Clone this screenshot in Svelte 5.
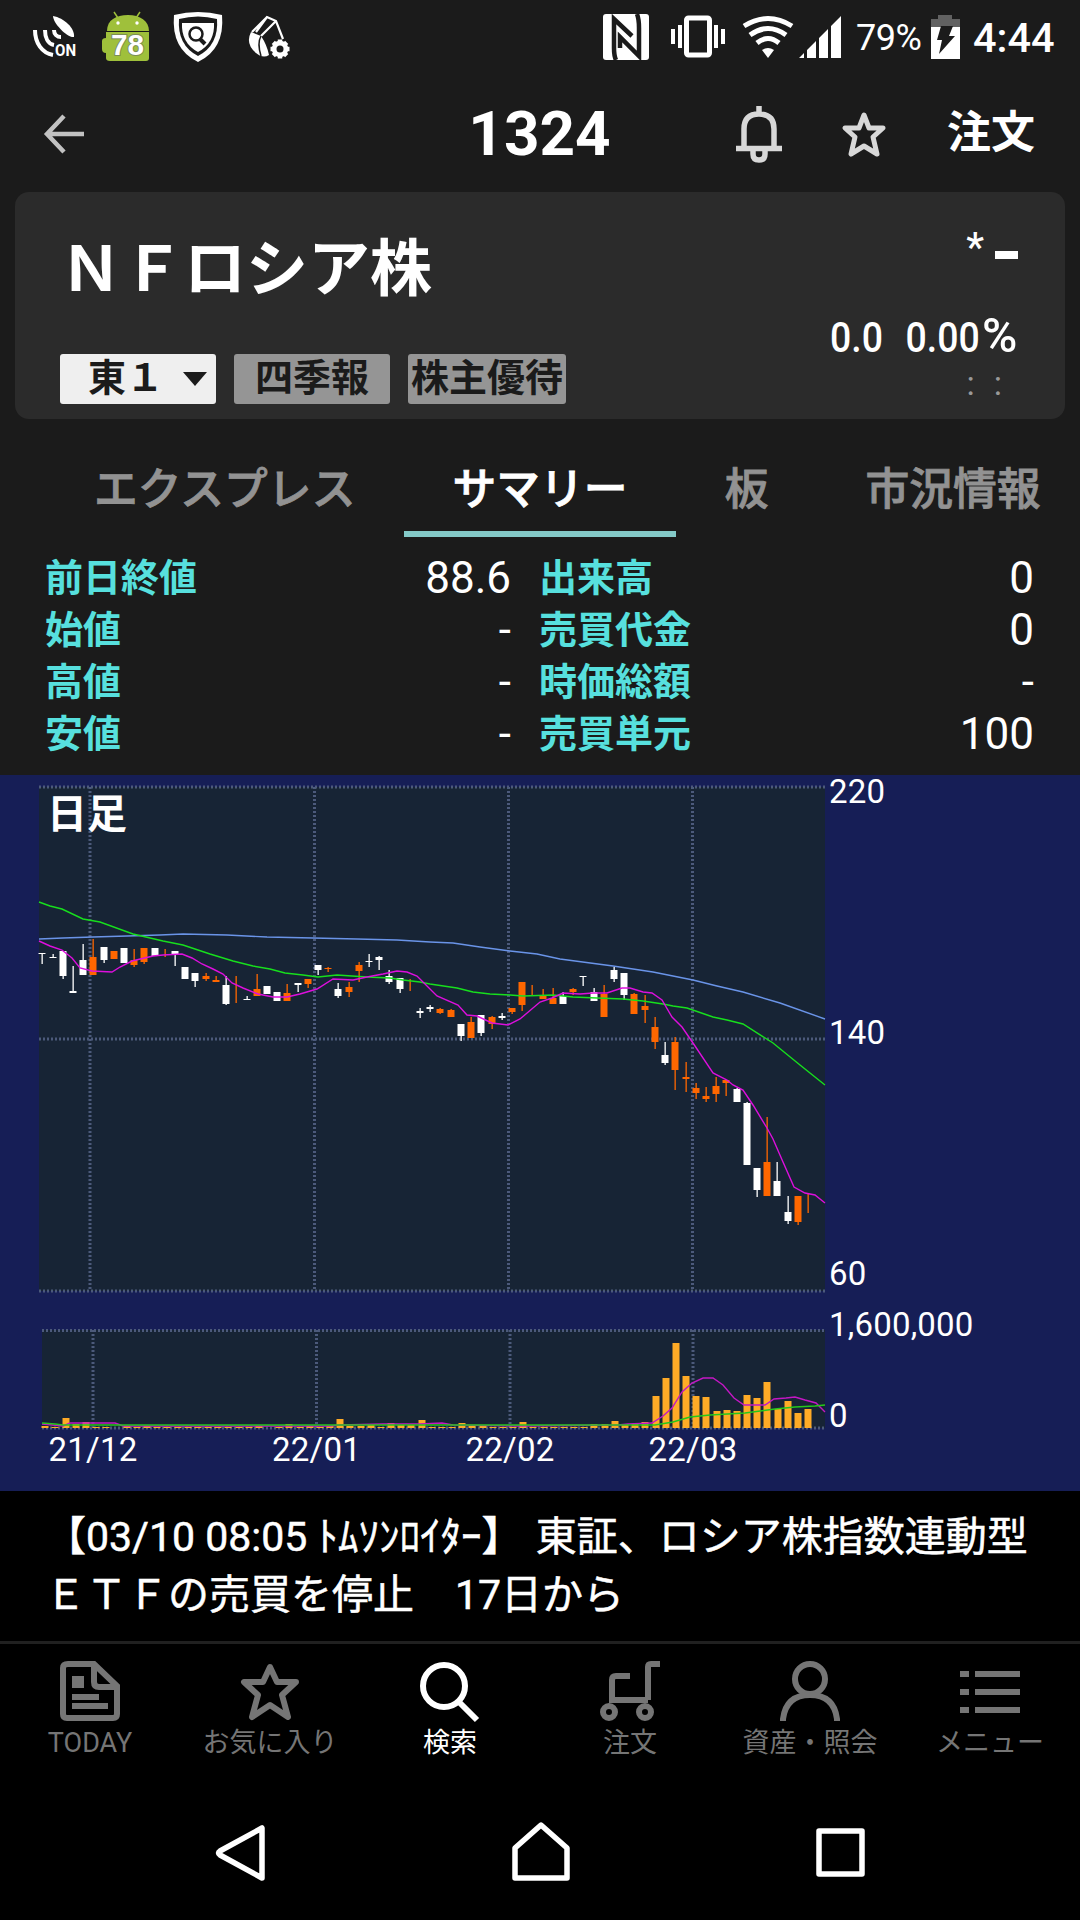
<script>
  let market = '東１';
  let activeTab = 'サマリー';
  let activeNav = '検索';

  const tabs = ['エクスプレス', 'サマリー', '板', '市況情報'];

  const quotes = [
    ['前日終値', '88.6', '出来高', '0'],
    ['始値', '-', '売買代金', '0'],
    ['高値', '-', '時価総額', '-'],
    ['安値', '-', '売買単元', '100']
  ];

  const navItems = [
    { label: 'TODAY', icon: 'today' },
    { label: 'お気に入り', icon: 'star' },
    { label: '検索', icon: 'search' },
    { label: '注文', icon: 'cart' },
    { label: '資産・照会', icon: 'person' },
    { label: 'メニュー', icon: 'menu' }
  ];

  // [high, body top, body bottom, low, up]
  const candles = [
    [178, 178, 179, 189, 0], [179, 182, 183, 183, 0], [176, 176, 201, 204, 0], [191, 216, 218, 218, 0],
    [169, 185, 200, 200, 0], [164, 182, 200, 200, 1], [172, 172, 185, 188, 0], [176, 176, 184, 184, 1],
    [173, 173, 188, 188, 0], [174, 185, 190, 192, 1], [173, 173, 187, 189, 1], [173, 173, 181, 181, 0],
    [174, 182, 182, 182, 1], [176, 176, 180, 191, 0], [192, 192, 204, 204, 0], [198, 198, 206, 212, 0],
    [198, 201, 204, 206, 1], [201, 205, 207, 207, 1], [201, 210, 229, 230, 0], [201, 228, 228, 228, 1],
    [221, 224, 225, 225, 0], [199, 214, 221, 221, 1], [211, 211, 219, 219, 0], [217, 217, 226, 226, 0],
    [209, 218, 226, 226, 1], [208, 208, 210, 217, 0], [204, 204, 209, 213, 1], [190, 190, 195, 200, 0],
    [192, 193, 194, 197, 1], [208, 214, 221, 223, 0], [207, 212, 217, 222, 1], [187, 190, 196, 207, 1],
    [179, 186, 187, 192, 0], [181, 182, 185, 195, 0], [195, 201, 207, 209, 0], [203, 203, 214, 218, 0],
    [204, 216, 216, 216, 1], [233, 236, 238, 243, 0], [230, 232, 234, 237, 0], [233, 234, 238, 239, 1],
    [234, 235, 242, 242, 1], [249, 249, 261, 266, 0], [242, 247, 263, 263, 1], [240, 240, 258, 261, 0],
    [241, 242, 249, 254, 1], [238, 241, 243, 245, 0], [233, 233, 237, 239, 1], [207, 207, 230, 236, 1],
    [210, 220, 220, 220, 1], [214, 220, 224, 224, 1], [213, 223, 229, 229, 1], [217, 221, 229, 229, 0],
    [213, 214, 217, 220, 1], [201, 201, 202, 211, 0], [213, 217, 226, 226, 0], [210, 219, 242, 242, 1],
    [192, 195, 204, 207, 0], [198, 198, 220, 225, 0], [218, 219, 239, 239, 1], [220, 231, 235, 248, 1],
    [242, 252, 267, 274, 1], [267, 280, 288, 290, 0], [262, 267, 295, 315, 1], [287, 302, 304, 317, 1],
    [308, 313, 318, 324, 1], [312, 321, 324, 327, 1], [302, 311, 319, 327, 1], [305, 305, 308, 321, 1],
    [313, 314, 327, 327, 0], [327, 328, 390, 390, 0], [393, 393, 415, 422, 0], [342, 387, 421, 421, 1],
    [387, 406, 421, 421, 0], [421, 437, 446, 449, 0], [421, 421, 447, 450, 1], [419, 438, 438, 438, 1]
  ];

  const volumes = [
    2, 1, 10, 4, 6, 1, 1, 0, 2, 1, 2, 1, 1, 1, 1, 1, 1, 1, 1,
    1, 1, 2, 0, 1, 4, 1, 2, 1, 2, 9, 2, 2, 4, 1, 5, 3, 3, 8,
    1, 1, 1, 5, 2, 2, 1, 1, 1, 6, 1, 1, 1, 1, 1, 1, 4, 4, 7,
    4, 4, 6, 32, 50, 85, 52, 32, 31, 17, 18, 17, 33, 30, 46, 19, 27, 15, 19
  ];

  const months = [
    { label: '21/12', price: 90, volume: 93 },
    { label: '22/01', price: 314.5, volume: 316.5 },
    { label: '22/02', price: 508.5, volume: 510 },
    { label: '22/03', price: 692.5, volume: 693 }
  ];

  const axis = [
    ['220', 28], ['140', 269], ['60', 510], ['1,600,000', 561], ['0', 652]
  ];

  const longAverage =
    '39,164 63,163 93,162 127,161 160,160 183,159 227,160 267,162 313,163 357,164 397,165 430,167 453,168 480,172 510,176 537,179 560,184 613,191 653,197 693,205 717,211 743,217 780,228 825,244';
  const midAverage =
    '39,127 50,131 62,134 83,144 100,147 133,159 163,166 183,170 210,179 233,186 253,191 270,194 285,198 303,200 318,202 337,200 367,202 390,203 403,205 420,207 430,209 457,213 473,217 490,219 510,220 523,221 553,220 573,222 597,223 623,224 643,226 663,229 673,231 687,233 713,242 727,245 743,249 773,268 800,290 825,310';
  const shortAverage =
    '39,166 50,171 62,175 72,183 80,193 92,196 112,197 120,192 132,186 153,181 163,180 182,179 192,183 202,189 213,194 223,199 232,208 243,213 258,219 273,222 287,222 300,219 317,214 333,204 353,205 367,202 383,199 397,196 407,197 417,201 425,209 437,221 458,230 467,240 477,241 492,248 508,250 520,244 540,227 552,223 563,218 580,219 593,218 607,218 622,213 630,213 643,217 652,218 662,225 672,242 682,252 693,268 713,298 727,305 733,310 743,315 753,330 767,353 773,364 783,387 794,412 805,418 815,420 825,428';
  const volumeShort =
    '42,649 63,651 70,648 115,648 123,651 330,651 340,650 383,649 420,649 442,648 453,650 520,651 618,650 628,649 652,648 663,641 672,633 682,617 692,608 703,603 713,603 723,610 734,623 744,630 765,630 774,624 786,623 795,622 805,625 816,628 825,637';
  const volumeMid =
    '42,648 55,649 63,650 500,650 655,650 673,647 690,642 710,640 745,638 775,634 795,632 815,631 825,630';
</script>

<div class="app">
  <div class="status">
    <div class="status-left">
      <svg width="44" height="42" viewBox="0 0 44 42">
        <path d="M20 0c11 2 22 12 21 21C34 22 20 7 20 0z" fill="#fff" />
        <g fill="none" stroke="#fff" stroke-width="4">
          <path d="M21 14c0 4 3 7 7 7" /><path d="M12 14c0 8 3 14 9 15" /><path d="M2 14c0 13 7 23 18 25" />
        </g>
        <text x="22" y="40" class="gps-text" textLength="21" lengthAdjust="spacingAndGlyphs">ON</text>
      </svg>
      <svg width="48" height="52" viewBox="0 0 48 52">
        <path d="M5 20C5 9 14 4 26 4s21 6 21 16z" fill="#9fc03b" />
        <path d="M12 1l4 6M38 1l-4 6" stroke="#9fc03b" stroke-width="1.5" />
        <path d="M4 21h43v26q0 3-3 3H8q-4 0-4-3v-5q-4 0-4-4V30q0-3 4-3z" fill="#9fc03b" />
        <circle cx="16" cy="12" r="1.7" fill="#fff" /><circle cx="35" cy="12" r="1.7" fill="#fff" />
        <text x="9" y="44" class="badge-text" textLength="33" lengthAdjust="spacingAndGlyphs">78</text>
      </svg>
      <svg class="shield" width="50" height="52" viewBox="0 0 50 52">
        <path d="M1 4Q25-2 49 4Q52 38 25 51Q-2 38 1 4z" fill="#fff" />
        <path d="M6 8Q25 3 44 8Q46 34 25 45Q4 34 6 8z" fill="#1b1b1b" />
        <path d="M9 12h32Q42 32 25 41Q8 32 9 12z" fill="#fff" />
        <circle cx="23" cy="23" r="6.5" fill="none" stroke="#1b1b1b" stroke-width="2.5" />
        <path d="M27 28l5 5" stroke="#1b1b1b" stroke-width="4" />
      </svg>
      <svg width="44" height="44" viewBox="0 0 44 44">
        <path d="M5 17L20 2l9 4 7 18M20 2L9 17M29 6L14 21" fill="none" stroke="#fff" stroke-width="2.2" />
        <path d="M4 17L14 21Q20 30 22 40Q16 44 9 38Q-2 29 4 17z" fill="#fff" />
        <path d="M14 21Q10 28 14 41" fill="none" stroke="#1b1b1b" stroke-width="1.5" />
        <circle cx="33" cy="34" r="6" fill="none" stroke="#fff" stroke-width="4.5" />
        <path d="M33 24.500v19M23.500 34h19M26.300 27.300l13.400 13.400M39.700 27.300L26.300 40.700" stroke="#fff" stroke-width="4.5" />
        <circle cx="33" cy="34" r="3.5" fill="#1b1b1b" />
      </svg>
    </div>
    <div class="status-right">
      <svg class="nfc" width="46" height="46" viewBox="0 0 46 46">
        <rect width="46" height="46" rx="3" fill="#fff" />
        <path d="M13 46Q11 42 11 34V5l18 17M34 0q2 5 2 14v28L17 23v11" fill="none" stroke="#1b1b1b" stroke-width="4.5" />
      </svg>
      <svg class="vibrate" width="54" height="42" viewBox="0 0 54 42">
        <path d="M0 13h4v15H0zM7 9h4v23H7zM43 9h4v23h-4zM50 13h4v15h-4z" fill="#fff" />
        <rect x="15.500" y="2" width="23" height="37" rx="2" fill="none" stroke="#fff" stroke-width="5" />
      </svg>
      <svg class="wifi" width="52" height="42" viewBox="0 0 52 42">
        <g fill="none" stroke="#fff" stroke-width="5">
          <path d="M2 10Q26-5 50 10" /><path d="M8 19Q26 6 44 19" /><path d="M15 27Q26 18 37 27" />
        </g>
        <path d="M20 34q6-4 12 0l-6 8z" fill="#fff" />
      </svg>
      <svg class="signal" width="42" height="42" viewBox="0 0 42 42">
        <path d="M0 42l5-5v5zM8 34l9-9v17H8zM20 22l9-9v29h-9zM32 10L42 0v42H32z" fill="#fff" />
      </svg>
      <span class="percent">79%</span>
      <svg class="battery" width="29" height="44" viewBox="0 0 29 44">
        <path d="M0 4h7V0h14v4h8v9H0z" fill="#616161" /><path d="M0 12h29v32H0z" fill="#fff" />
        <path d="M10 11h12l-4 10h6L8 39l3-14H6z" fill="#1b1b1b" />
      </svg>
      <span class="clock">4:44</span>
    </div>
  </div>

  <header>
    <button class="back" aria-label="戻る">
      <svg width="40" height="40" viewBox="0 0 40 40">
        <path d="M20 2L3 20l17 18M4 20h36" fill="none" stroke="#c2c2c2" stroke-width="4.500" />
      </svg>
    </button>
    <h1>1324</h1>
    <div class="actions">
      <svg width="46" height="58" viewBox="0 0 46 58">
        <path d="M8 43V24Q8 9 23 9t15 15v19M0 43.500h46M23 1v8M17 45v4q0 6 6 6t6-6v-4" fill="none" stroke="#d8d8d8" stroke-width="5.5" />
      </svg>
      <svg class="star" width="46" height="48" viewBox="0 0 46 48">
        <path d="M23 5l5 13h14L32 27l4 17-13-8-13 8 4-17L4 18h14z" fill="none" stroke="#d8d8d8" stroke-width="5" stroke-linejoin="round" />
      </svg>
      <button class="order">注文</button>
    </div>
  </header>

  <section class="card">
    <div class="card-left">
      <h2>ＮＦロシア株</h2>
      <div class="chips">
        <button class="chip market">{market}<span class="caret"></span></button>
        <button class="chip">四季報</button>
        <button class="chip benefit">株主優待</button>
      </div>
    </div>
    <div class="card-right">
      <div class="price"><span class="mark">*</span><span class="dash"></span></div>
      <div class="change"><span>0.0</span><span>0.00<b>%</b></span></div>
      <div class="time"><span>:</span><span>:</span></div>
    </div>
  </section>

  <nav class="tabs">
    {#each tabs as tab}
      <button class:active={tab === activeTab} on:click={() => (activeTab = tab)}>{tab}</button>
    {/each}
  </nav>

  <section class="quotes">
    {#each quotes as [label, value, label2, value2]}
      <span class="label">{label}</span>
      <span class="value">{value}</span>
      <span class="label second">{label2}</span>
      <span class="value">{value2}</span>
    {/each}
  </section>

  <section class="chart">
    <svg width="1080" height="716" viewBox="0 0 1080 716">
      <rect x="39" y="12" width="786" height="504" fill="#172435" />
      <rect x="42" y="555" width="783" height="98" fill="#172435" />

      <g class="grid">
        {#each [12, 264, 516] as y}
          <line x1="39" x2="825" y1={y} y2={y} />
        {/each}
        {#each [555.5, 653] as y}
          <line x1="42" x2="825" y1={y} y2={y} />
        {/each}
        {#each months as m}
          <line x1={m.price} x2={m.price} y1="12" y2="516" />
          <line x1={m.volume} x2={m.volume} y1="555" y2="653" />
        {/each}
      </g>

      {#each candles as [high, top, bottom, low, up], i}
        {@const x = Math.round(42.3 + i * 10.21)}
        <rect class:up x={x - 0.5} y={high} width="1.300" height={low - high} class="candle" />
        <rect class:up x={x - 3.5} y={top} width="7" height={bottom - top} class="candle" />
      {/each}

      {#each volumes as v, i}
        <rect x={Math.round(45.3 + i * 10.17) - 3.5} y={653 - v} width="7" height={v} fill="#ffab26" />
      {/each}

      <g class="averages">
        <polyline points={longAverage} stroke="#6a94e8" />
        <polyline points={midAverage} stroke="#17df1d" />
        <polyline points={shortAverage} stroke="#dd0fdd" />
        <polyline points={volumeShort} stroke="#c417c4" />
        <polyline points={volumeMid} stroke="#25c81c" />
      </g>

      <text x="47" y="53" class="period">日足</text>
      {#each axis as [label, y]}
        <text x="829" {y} class="tick">{label}</text>
      {/each}
      {#each months as m}
        <text x={m.volume} y="686" class="tick month">{m.label}</text>
      {/each}
    </svg>
  </section>

  <section class="news">
    <p><span class="source">【03/10 08:05 ﾄﾑｿﾝﾛｲﾀｰ】</span> 東証、ロシア株指数連動型</p>
    <p>ＥＴＦの売買を停止　17日から</p>
  </section>

  <nav class="bottom">
    {#each navItems as item}
      <button class:active={item.label === activeNav} on:click={() => (activeNav = item.label)}>
        <svg width="60" height="60" viewBox="0 0 60 60" fill="none" stroke="currentColor" stroke-width="6">
          {#if item.icon === 'today'}
            <path d="M8 3h26l23 22v28q0 4-4 4H7q-4 0-4-4V7q0-4 5-4zM34 3v18q0 5 5 5h18" />
            <path d="M12 15h12v12H12zM12 33h27v6H12zM12 42h36v6H12z" fill="currentColor" stroke="none" />
          {:else if item.icon === 'star'}
            <path d="M30 6l7 15h19L42 34l6 22-18-12-18 12 6-22L4 21h19z" stroke-linejoin="round" />
          {:else if item.icon === 'search'}
            <circle cx="24" cy="25" r="21" /><path d="M38 40l19 19" />
          {:else if item.icon === 'cart'}
            <path d="M60 3h-9q-3 0-3 3v33M30 15H16q-4 0-4 4v20h36" />
            <circle cx="9" cy="51" r="6" /><circle cx="45" cy="51" r="6" />
          {:else if item.icon === 'person'}
            <circle cx="30" cy="18" r="15" /><path d="M3 60V58Q6 34 30 34t27 24v2" />
          {:else}
            <path d="M0 13h9M15 13h45M0 31h9M15 31h45M0 49h9M15 49h45" />
          {/if}
        </svg>
        <span>{item.label}</span>
      </button>
    {/each}
  </nav>

  <div class="system">
    <svg width="50" height="58" viewBox="0 0 50 58">
      <path d="M47 4v50L5 31q-3-2 0-4z" />
    </svg>
    <svg width="58" height="60" viewBox="0 0 58 60">
      <path d="M3 25L29 2l26 23v30H3z" />
    </svg>
    <svg width="49" height="49" viewBox="0 0 49 49">
      <rect x="3" y="3" width="43" height="43" />
    </svg>
  </div>
</div>

<style>
  :global(body) {
    margin: 0;
    background: #000;
  }

  .app {
    width: 1080px;
    height: 1920px;
    display: flex;
    flex-direction: column;
    overflow: hidden;
    background: #1b1b1b;
    color: #fff;
    font-family: Roboto, 'Noto Sans CJK JP', sans-serif;
  }

  button {
    padding: 0;
    border: none;
    background: none;
    color: inherit;
    font: inherit;
  }

  h1, h2, p {
    margin: 0;
  }

  svg {
    display: block;
    flex: none;
    overflow: visible;
  }

  .status {
    height: 74px;
    box-sizing: border-box;
    padding: 0 26px 1px 33px;
    display: flex;
    align-items: center;
    justify-content: space-between;
  }

  .status-left {
    display: flex;
    align-items: center;
    gap: 25px;
  }

  .shield {
    margin: 0 -1px 0 -2px;
  }

  .status-right {
    display: flex;
    align-items: center;
  }

  .gps-text {
    font: 700 17px Roboto;
    fill: #fff;
  }

  .badge-text {
    font: 700 29px 'Liberation Sans';
    fill: #fff;
    stroke: #7c8d55;
    stroke-width: 2px;
    paint-order: stroke;
  }

  .nfc { margin-right: 22px; }
  .vibrate { margin-right: 17px; }
  .wifi { margin-right: 5px; }
  .signal { margin-right: 15px; }

  .percent {
    width: 75px;
    font-size: 36px;
    font-weight: 400;
    letter-spacing: -0.5px;
    padding-top: 2px;
  }

  .battery { margin-right: 13px; }

  .clock {
    width: 81px;
    font-size: 41.5px;
    font-weight: 500;
    padding-top: 1px;
  }

  header {
    height: 118px;
    box-sizing: border-box;
    padding: 2px 45px 0 44px;
    display: grid;
    grid-template-columns: 1fr auto 1fr;
    align-items: center;
  }

  .back {
    justify-self: start;
  }

  h1 {
    font-size: 62px;
    line-height: 116px;
    font-weight: 700;
  }

  .actions {
    display: flex;
    align-items: center;
    justify-content: flex-end;
  }

  .star { margin: 0 60px 0 59px; }

  .order {
    font-size: 44px;
    font-weight: 700;
    line-height: 60px;
    padding-bottom: 3px;
  }

  .card {
    height: 227px;
    box-sizing: border-box;
    margin: 0 15px;
    padding: 33px 46px 15px 45px;
    border-radius: 14px;
    background: #2b2b2b;
    display: flex;
    justify-content: space-between;
  }

  .card-left {
    display: flex;
    flex-direction: column;
    justify-content: space-between;
  }

  h2 {
    font-size: 62px;
    font-weight: 700;
    line-height: 90px;
    white-space: nowrap;
  }

  .chips {
    display: flex;
    gap: 18px;
  }

  .chip {
    width: 156px;
    height: 50px;
    border-radius: 3px;
    background: #959595;
    color: #1b1b1b;
    font-size: 38px;
    font-weight: 700;
    line-height: 48px;
    padding-bottom: 2px;
    white-space: nowrap;
  }

  .market {
    display: flex;
    align-items: center;
    justify-content: flex-end;
    gap: 19px;
    padding-right: 9px;
    background: #efefef;
  }

  .benefit {
    width: 158px;
  }

  .caret {
    border: 12px solid transparent;
    border-top: 14px solid #1b1b1b;
    border-bottom: 0;
    margin-top: 2px;
  }

  .card-right {
    display: flex;
    flex-direction: column;
    align-items: flex-end;
  }

  .price {
    height: 84px;
    display: flex;
    align-items: flex-start;
    gap: 11px;
  }

  .mark {
    font-size: 40px;
    line-height: 46px;
    font-weight: 500;
  }

  .dash {
    width: 23px;
    height: 8px;
    margin: 26px 1px 0 0;
    background: #fff;
  }

  .change {
    height: 54px;
    display: flex;
    align-items: baseline;
    gap: 26px;
    font-size: 43px;
    line-height: 54px;
    font-weight: 500;
    margin-right: 2px;
    transform: scaleX(0.87);
    transform-origin: right;
  }

  .change b {
    display: inline-block;
    font-size: 48px;
    font-weight: 500;
    margin-left: 8px;
    transform: scaleX(1.15);
    transform-origin: right;
  }

  .time {
    display: flex;
    gap: 19px;
    padding-right: 17px;
    color: #999;
    font-size: 34px;
    line-height: 40px;
  }

  .tabs {
    height: 118px;
    display: flex;
    align-items: stretch;
  }

  .tabs button {
    flex: none;
    font-size: 43.8px;
    font-weight: 500;
    color: #929292;
    -webkit-text-stroke: 0.8px currentColor;
    padding: 21px 48.5px 0;
    border-bottom: 6px solid transparent;
    white-space: nowrap;
  }

  .tabs button:first-child {
    padding-left: 94px;
  }

  .tabs .active {
    color: #fff;
    border-bottom-color: #84cac8;
  }

  .quotes {
    height: 238px;
    box-sizing: border-box;
    padding: 15px 46px 0 45px;
    display: grid;
    grid-template-columns: 241px 225px 240px 1fr;
    grid-auto-rows: 52px;
    align-items: center;
  }

  .label {
    color: #57e0de;
    font-size: 38px;
    font-weight: 700;
    line-height: 52px;
  }

  .second {
    padding-left: 28px;
  }

  .value {
    font-size: 44px;
    line-height: 52px;
    text-align: right;
  }

  .chart {
    height: 716px;
    background: #161e56;
  }

  .grid line {
    stroke: #4c5a7b;
    stroke-width: 3;
    stroke-dasharray: 2 2;
  }

  .candle {
    fill: #fff;
  }

  .candle.up {
    fill: #ff6700;
  }

  .averages polyline {
    fill: none;
    stroke-width: 1.4;
  }

  .period {
    font-size: 40px;
    font-weight: 700;
    fill: #fff;
  }

  .tick {
    font-size: 33px;
    letter-spacing: 0.2px;
    fill: #fff;
  }

  .month {
    text-anchor: middle;
  }

  .news {
    height: 153px;
    box-sizing: border-box;
    padding: 17px 45px 0;
    background: #000;
    border-bottom: 3px solid #202020;
    font-size: 41px;
    line-height: 58px;
    white-space: nowrap;
    -webkit-text-stroke: 0.5px currentColor;
  }

  .source {
    margin-right: 3px;
  }

  .bottom {
    height: 117px;
    padding-top: 17px;
    display: grid;
    grid-template-columns: repeat(6, 1fr);
    background: #000;
    color: #757575;
  }

  .bottom button {
    display: flex;
    flex-direction: column;
    align-items: center;
    font-size: 27px;
    line-height: 44px;
    white-space: nowrap;
  }

  .bottom .active {
    color: #fff;
  }

  .system {
    flex: 1;
    padding: 7px 215px 0;
    display: flex;
    align-items: center;
    justify-content: space-between;
    background: #000;
  }

  .system svg {
    fill: none;
    stroke: #fff;
    stroke-width: 5.5;
    stroke-linejoin: round;
  }
</style>
